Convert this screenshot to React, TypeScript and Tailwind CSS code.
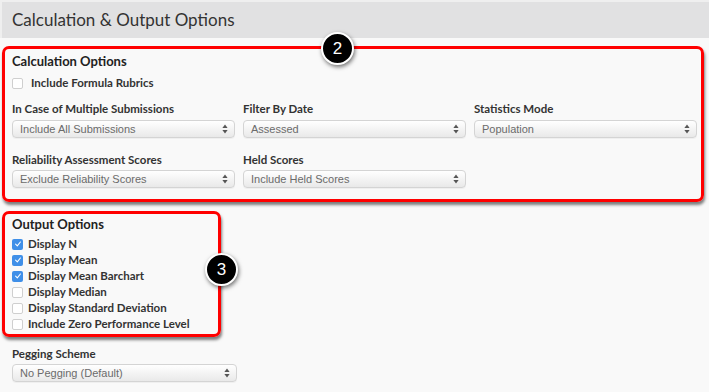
import React from 'react';

const labelCls = "text-[11.5px] leading-[14px] font-bold text-[#333]";

function Select({ value }: { value: string }) {
  return (
    <div className="h-[18px] rounded-[4px] border border-[#d4d4d4] bg-gradient-to-b from-[#ffffff] to-[#e9e9e9] flex items-center justify-between pl-[7px] pr-[6px] shadow-[0_1px_0_rgba(0,0,0,0.04)]">
      <span className="font-['Liberation_Sans',sans-serif] text-[11px] text-[#6b6b6b] leading-none">{value}</span>
      <svg width="6" height="10" viewBox="0 0 6 10" className="text-[#555]">
        <path d="M3 0.5 L5.6 4 H0.4 Z" fill="currentColor" />
        <path d="M3 9.5 L5.6 6 H0.4 Z" fill="currentColor" />
      </svg>
    </div>
  );
}

function Checkbox({ checked, label, gap = "gap-[5px]" }: { checked?: boolean; label: string; gap?: string }) {
  return (
    <div className={`flex items-center h-[16px] ${gap}`}>
      {checked ? (
        <span className="w-[11px] h-[11px] rounded-[2px] bg-[#3f8fe8] flex items-center justify-center">
          <svg width="8" height="8" viewBox="0 0 8 8">
            <path d="M1.6 4.2 L3.3 5.8 L6.4 2" fill="none" stroke="white" strokeWidth="1.1" strokeLinecap="round" strokeLinejoin="round" />
          </svg>
        </span>
      ) : (
        <span className="w-[11px] h-[11px] rounded-[2px] bg-white border border-[#cfcfcf]" />
      )}
      <span className={labelCls}>{label}</span>
    </div>
  );
}

function Badge({ n, className }: { n: string; className: string }) {
  return (
    <div className={`absolute w-[33px] h-[33px] rounded-full bg-black border-2 border-white text-white flex items-center justify-center font-['Liberation_Sans',sans-serif] text-[17px] shadow-[1px_2px_4px_rgba(0,0,0,0.55)] ${className}`}>
      {n}
    </div>
  );
}

const outputOptions = [
  { label: "Display N", checked: true },
  { label: "Display Mean", checked: true },
  { label: "Display Mean Barchart", checked: true },
  { label: "Display Median", checked: false },
  { label: "Display Standard Deviation", checked: false },
  { label: "Include Zero Performance Level", checked: false },
];

export default function App() {
  return (
    <div className="w-[709px] h-[392px] bg-[#f9f9f9] overflow-hidden font-['Lato',sans-serif]">
      <div className="h-[38px] bg-[#e1e1e2] border-t-2 border-l-2 border-[#efefef] pl-[10px] flex items-center text-[17px] text-[#333]">
        Calculation &amp; Output Options
      </div>

      <div className="px-[2px] pt-[8px]">
        <div className="relative mr-[3px] border-[3px] border-[#ff0000] rounded-[7px] shadow-[1px_3px_3px_rgba(0,0,0,0.5)] pl-[7px] pr-[4px] pt-[4px] pb-[11px]">
          <Badge n="2" className="left-[316px] top-[-17px]" />
          <div className="text-[13px] leading-[16px] font-bold text-[#222]">Calculation Options</div>
          <div className="mt-[6px]">
            <Checkbox label="Include Formula Rubrics" gap="gap-[8px]" />
          </div>
          <div className="grid grid-cols-3 gap-x-[8px] mt-[11px]">
            <div>
              <div className={labelCls}>In Case of Multiple Submissions</div>
              <div className="mt-[4px]"><Select value="Include All Submissions" /></div>
            </div>
            <div>
              <div className={labelCls}>Filter By Date</div>
              <div className="mt-[4px]"><Select value="Assessed" /></div>
            </div>
            <div>
              <div className={labelCls}>Statistics Mode</div>
              <div className="mt-[4px]"><Select value="Population" /></div>
            </div>
          </div>
          <div className="grid grid-cols-3 gap-x-[8px] mt-[15px]">
            <div>
              <div className={labelCls}>Reliability Assessment Scores</div>
              <div className="mt-[3px]"><Select value="Exclude Reliability Scores" /></div>
            </div>
            <div>
              <div className={labelCls}>Held Scores</div>
              <div className="mt-[3px]"><Select value="Include Held Scores" /></div>
            </div>
          </div>
        </div>

        <div className="relative mt-[9px] w-[219px] border-[3px] border-[#ff0000] rounded-[7px] shadow-[1px_3px_3px_rgba(0,0,0,0.5)] pl-[7px] pt-[2px] pb-[2px]">
          <Badge n="3" className="left-[200px] top-[39px]" />
          <div className="text-[13px] leading-[16px] font-bold text-[#222]">Output Options</div>
          <div className="mt-[4px] flex flex-col">
            {outputOptions.map((o, i) => (
              <Checkbox key={i} label={o.label} checked={o.checked} />
            ))}
          </div>
        </div>

        <div className="pl-[10px] mt-[10px] w-[235px]">
          <div className={labelCls}>Pegging Scheme</div>
          <div className="mt-[3px]"><Select value="No Pegging (Default)" /></div>
        </div>
      </div>
    </div>
  );
}
